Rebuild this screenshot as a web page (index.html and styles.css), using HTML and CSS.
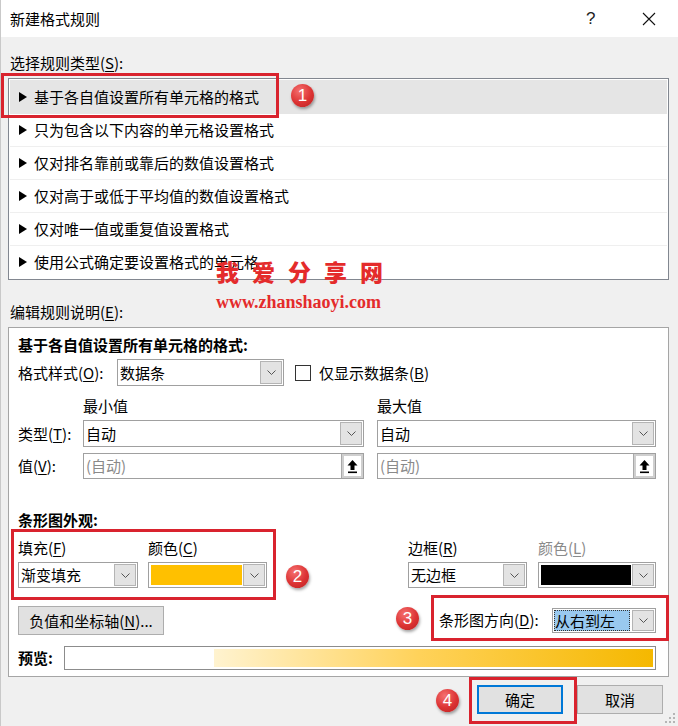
FILE: index.html
```html
<!DOCTYPE html>
<html lang="zh-cn">
<head>
	<meta charset="UTF-8">
	<title>新建格式规则</title>
	<link rel="stylesheet" href="styles.css">
</head>
<body>

	<div class="dialog">
		<div class="titlebar">
			<span class="title">新建格式规则</span>
			<span class="help">?</span>
			<span class="close">
				<svg width="14" height="14" viewBox="0 0 14 14"><path d="M1 1L13 13M13 1L1 13" stroke="#111" stroke-width="1.1" fill="none"/></svg>
			</span>
		</div>

		<div class="content">
			<div class="caption">选择规则类型(<u>S</u>):</div>
			<ul class="rules">
				<li class="on"><i class="tri"></i>基于各自值设置所有单元格的格式</li>
				<li><i class="tri"></i>只为包含以下内容的单元格设置格式</li>
				<li><i class="tri"></i>仅对排名靠前或靠后的数值设置格式</li>
				<li><i class="tri"></i>仅对高于或低于平均值的数值设置格式</li>
				<li><i class="tri"></i>仅对唯一值或重复值设置格式</li>
				<li><i class="tri"></i>使用公式确定要设置格式的单元格</li>
			</ul>

			<div class="caption edit">编辑规则说明(<u>E</u>):</div>
			<div class="panel">
				<div class="ptitle">基于各自值设置所有单元格的格式:</div>

				<div class="row style-row">
					<span class="lbl-style">格式样式(<u>O</u>):</span>
					<div class="combo w-style"><span class="val">数据条</span><span class="arrow"><svg width="9" height="5" viewBox="0 0 9 5"><path d="M0.5 0.5L4.5 4.5L8.5 0.5" stroke="#555" fill="none"/></svg></span></div>
					<span class="check"></span>
					<span class="check-lbl">仅显示数据条(<u>B</u>)</span>
				</div>

				<div class="row heads">
					<span class="lbl-side"></span>
					<span class="head-min">最小值</span>
					<span>最大值</span>
				</div>

				<div class="row type-row">
					<span class="lbl-side">类型(<u>T</u>):</span>
					<div class="combo w-min"><span class="val">自动</span><span class="arrow"><svg width="9" height="5" viewBox="0 0 9 5"><path d="M0.5 0.5L4.5 4.5L8.5 0.5" stroke="#555" fill="none"/></svg></span></div>
					<div class="combo w-max"><span class="val">自动</span><span class="arrow"><svg width="9" height="5" viewBox="0 0 9 5"><path d="M0.5 0.5L4.5 4.5L8.5 0.5" stroke="#555" fill="none"/></svg></span></div>
				</div>

				<div class="row val-row">
					<span class="lbl-side">值(<u>V</u>):</span>
					<div class="combo w-min"><span class="val dim">(自动)</span><span class="upload"><svg width="11" height="15" viewBox="0 0 11 15"><path d="M5.5 1L10.5 6.5H7.5V11H3.5V6.5H0.5Z" fill="#000"/><rect x="1" y="12.5" width="9" height="1.6" fill="#000"/></svg></span></div>
					<div class="combo w-max"><span class="val dim">(自动)</span><span class="upload"><svg width="11" height="15" viewBox="0 0 11 15"><path d="M5.5 1L10.5 6.5H7.5V11H3.5V6.5H0.5Z" fill="#000"/><rect x="1" y="12.5" width="9" height="1.6" fill="#000"/></svg></span></div>
				</div>

				<div class="ptitle bar-title">条形图外观:</div>

				<div class="row look-lbls">
					<span class="l-fill">填充(<u>F</u>)</span>
					<span class="l-color">颜色(<u>C</u>)</span>
					<span class="l-border">边框(<u>R</u>)</span>
					<span class="dim">颜色(<u>L</u>)</span>
				</div>

				<div class="row look-combos">
					<div class="combo c-fill"><span class="val">渐变填充</span><span class="arrow"><svg width="9" height="5" viewBox="0 0 9 5"><path d="M0.5 0.5L4.5 4.5L8.5 0.5" stroke="#555" fill="none"/></svg></span></div>
					<div class="combo c-color"><span class="swatch yellow"></span><span class="arrow"><svg width="9" height="5" viewBox="0 0 9 5"><path d="M0.5 0.5L4.5 4.5L8.5 0.5" stroke="#555" fill="none"/></svg></span></div>
					<div class="combo c-border"><span class="val">无边框</span><span class="arrow"><svg width="9" height="5" viewBox="0 0 9 5"><path d="M0.5 0.5L4.5 4.5L8.5 0.5" stroke="#555" fill="none"/></svg></span></div>
					<div class="combo c-colorl"><span class="swatch black"></span><span class="arrow"><svg width="9" height="5" viewBox="0 0 9 5"><path d="M0.5 0.5L4.5 4.5L8.5 0.5" stroke="#555" fill="none"/></svg></span></div>
				</div>

				<div class="row axis-row">
					<button class="btn axis">负值和坐标轴(<u>N</u>)...</button>
					<span class="dir-lbl">条形图方向(<u>D</u>):</span>
					<div class="combo c-dir"><span class="val"><span class="sel">从右到左</span></span><span class="arrow"><svg width="9" height="5" viewBox="0 0 9 5"><path d="M0.5 0.5L4.5 4.5L8.5 0.5" stroke="#555" fill="none"/></svg></span></div>
				</div>

				<div class="row preview-row">
					<span class="prev-lbl">预览:</span>
					<div class="preview"><div class="bar"></div></div>
				</div>
			</div>

			<div class="actions">
				<button class="btn ok">确定</button>
				<button class="btn">取消</button>
			</div>
		</div>

		<svg class="grip" width="12" height="12" viewBox="0 0 12 12">
			<rect x="9" y="1" width="2" height="2" fill="#b5b5b5"/>
			<rect x="5" y="5" width="2" height="2" fill="#b5b5b5"/>
			<rect x="9" y="5" width="2" height="2" fill="#b5b5b5"/>
			<rect x="1" y="9" width="2" height="2" fill="#b5b5b5"/>
			<rect x="5" y="9" width="2" height="2" fill="#b5b5b5"/>
			<rect x="9" y="9" width="2" height="2" fill="#b5b5b5"/>
		</svg>

		<!-- 标注 -->
		<div class="mark m1"></div>
		<div class="mark m2"></div>
		<div class="mark m3"></div>
		<div class="mark m4"></div>
		<span class="num n1">1</span>
		<span class="num n2">2</span>
		<span class="num n3">3</span>
		<span class="num n4">4</span>

		<div class="wm-cn">我爱分享网</div>
		<div class="wm-url">www.zhanshaoyi.com</div>
	</div>

</body>
</html>
```

FILE: styles.css
```css
* {padding: 0; margin: 0; box-sizing: border-box;}
li {list-style: none;}
u {text-decoration-thickness: 1px; text-underline-offset: 2px;}
body {width: 678px; height: 726px; overflow: hidden; background: #f0f0f0; font: 15px/20px "Noto Sans CJK SC", sans-serif; color: #000;}

.dialog {position: relative; width: 678px; height: 726px; background: #f0f0f0; border-left: 1px solid #c9c9c9;}

.titlebar {height: 37px; background: #fff; display: flex; align-items: center; padding-left: 9px;}
.titlebar .title {font-size: 15px;}
.titlebar .help {margin-left: auto; font: 17px/20px "Liberation Sans", sans-serif; color: #222; width: 14px;}
.titlebar .close {margin-left: 42px; margin-right: 22px; display: flex;}

.content {padding: 16px 9px 0 7px;}
.caption {line-height: 20px; padding-left: 2px;}
.caption.edit {margin-top: 22px;}

.rules {margin-top: 5px; border: 1px solid #828790; background: #fff; padding: 1px;}
.rules li {height: 33px; display: flex; align-items: center; padding-left: 9px; border-top: 1px solid #efefef;}
.rules li:first-child {border-top: 0;}
.rules li.on {background: #e5e5e5;}
.rules li.on + li {border-top-color: #e5e5e5;}
.tri {display: inline-block; width: 0; height: 0; border-left: 8px solid #000; border-top: 5px solid transparent; border-bottom: 5px solid transparent; margin-right: 7px;}

.panel {margin-top: 5px; background: #fff; border: 1px solid #a5a5a5; padding: 7px 12px 5px 9px; height: 350px;}
.ptitle {font-weight: bold; line-height: 20px;}
.row {display: flex; align-items: center;}

.style-row {margin-top: 4px; height: 27px;}
.lbl-style {width: 99px;}
.check {width: 16px; height: 16px; border: 1px solid #333; background: #fff; margin-left: 11px;}
.check-lbl {margin-left: 8px;}

.heads {margin-top: 10px; height: 20px;}
.lbl-side {width: 65px;}
.head-min {width: 294px;}

.type-row {margin-top: 4px; height: 27px;}
.val-row {margin-top: 6px; height: 26px;}

.combo {display: flex; height: 100%; border: 1px solid #a0a0a0; background: #fff;}
.combo .val {flex: 1; display: flex; align-items: center; padding-left: 2px; white-space: nowrap; overflow: hidden;}
.combo .arrow {width: 22px; margin: 1px; border: 1px solid #b4b4b4; background: #e3e3e3; display: flex; align-items: center; justify-content: center;}
.combo .upload {width: 22px; border-left: 1px solid #a9a9a9; background: #fff; box-shadow: inset 0 0 0 2px #cfcfcf; display: flex; align-items: center; justify-content: center;}
.dim {color: #8a8a8a;}
.w-style {width: 167px;}
.w-min {width: 281px; margin-right: 13px;}
.w-max {width: 279px;}

.bar-title {margin-top: 31px;}
.look-lbls {margin-top: 8px; height: 20px;}
.l-fill {width: 130px;}
.l-color {width: 260px;}
.l-border {width: 130px;}

.look-combos {margin-top: 4px; height: 26px;}
.c-fill {width: 120px; margin-right: 10px;}
.c-color {width: 119px; margin-right: 141px;}
.c-border {width: 119px; margin-right: 11px;}
.c-colorl {width: 118px;}
.swatch {flex: 1; margin: 2px 0 2px 2px;}
.swatch.yellow {background: #ffc000;}
.swatch.black {background: #000;}

.axis-row {margin-top: 17px; height: 30px;}
.btn {font: 15px/20px "Noto Sans CJK SC", sans-serif; color: #000; background: #e1e1e1; border: 1px solid #adadad;}
.btn.axis {width: 146px; height: 29px; margin-top: 1px;}
.dir-lbl {margin-left: auto; width: 113px;}
.c-dir {width: 104px; height: 25px;}
.c-dir .val {padding: 1px;}
.c-dir .sel {display: block; width: 100%; height: 100%; background: #99c9ef; outline: 1px dotted #333; outline-offset: -1px; padding-left: 1px; line-height: 21px;}

.preview-row {margin-top: 11px; height: 24px;}
.prev-lbl {width: 46px; font-weight: bold;}
.preview {flex: 1; height: 24px; border: 1px solid #8c8c8c; padding: 2px;}
.preview .bar {height: 100%; background: linear-gradient(to right, #fff 0, #fff 25%, #fff3d0 25%, #ffd25a 60%, #f5b800 100%);}

.actions {display: flex; justify-content: flex-end; gap: 14px; margin-top: 8px; padding-right: 6px;}
.actions .btn {width: 86px; height: 29px;}
.actions .btn.ok {border: 2px solid #0078d7;}

.grip {position: absolute; right: 2px; bottom: 2px;}

.mark {position: absolute; border: 3px solid #d9232e;}
.m1 {left: 0; top: 73px; width: 278px; height: 45px;}
.m2 {left: 10px; top: 529px; width: 265px; height: 71px;}
.m3 {left: 430px; top: 595px; width: 238px; height: 46px;}
.m4 {left: 468px; top: 677px; width: 108px; height: 47px;}

.num {position: absolute; width: 23px; height: 23px; border-radius: 50%; background: radial-gradient(circle at 38% 30%, #f57070, #dc3333 55%, #b92121 100%); color: #fff; font: 17px/23px "Liberation Sans", sans-serif; text-align: center; box-shadow: 1px 2px 3px rgba(0,0,0,.35);}
.n1 {left: 290px; top: 84px;}
.n2 {left: 285px; top: 565px;}
.n3 {left: 395px; top: 607px;}
.n4 {left: 435px; top: 689px;}

.wm-cn {position: absolute; left: 215px; top: 258px; font: 900 23px/26px "Noto Sans CJK SC", sans-serif; color: #e42b2b; letter-spacing: 13px;}
.wm-url {position: absolute; left: 215px; top: 292px; font: bold 18px/20px "Liberation Serif", serif; color: #e42b2b;}
```
